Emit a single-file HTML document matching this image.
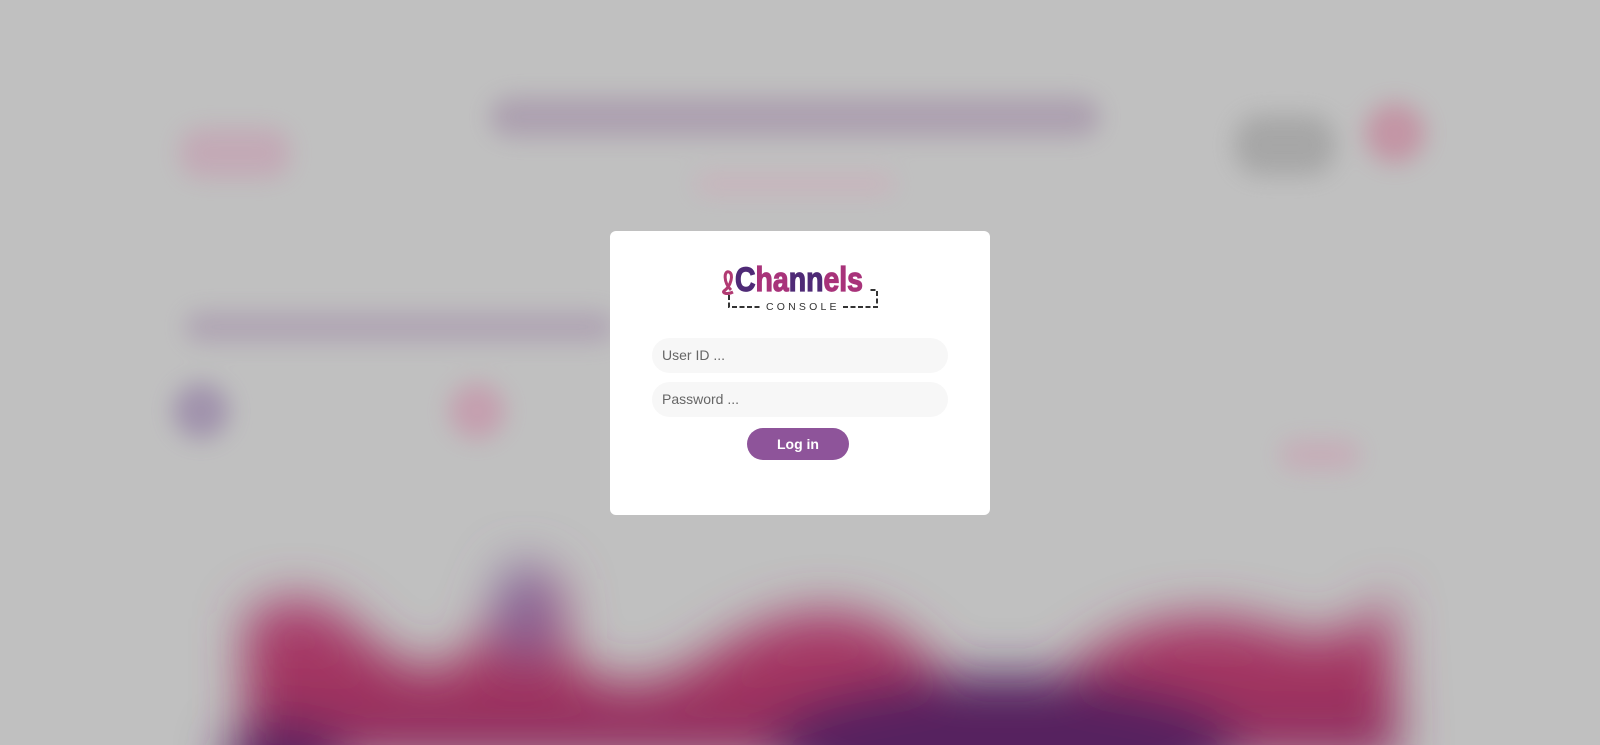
<!DOCTYPE html>
<html><head><meta charset="utf-8"><style>
html,body{margin:0;padding:0;width:1600px;height:745px;overflow:hidden;background:#c0c0c0;font-family:"Liberation Sans",Arial,sans-serif}
.bg{position:absolute;left:0;top:0;width:1600px;height:745px;overflow:hidden}
.card{position:absolute;left:610px;top:231px;width:380px;height:284px;background:#fff;border-radius:6px}
.inp{position:absolute;left:42px;width:296px;height:35px;background:#f7f7f7;border-radius:18px;font-size:14px;color:#666;line-height:35px;box-sizing:border-box;padding-left:10px}
.btn{position:absolute;left:137px;top:197px;width:102px;height:32px;background:#8e549a;border-radius:16px;color:#fff;font-weight:bold;font-size:14px;text-align:center;line-height:32px}
</style></head><body>
<svg class="bg" width="1600" height="745" viewBox="0 0 1600 745">
<defs>
<filter id="b" x="-20%" y="-20%" width="140%" height="140%"><feGaussianBlur stdDeviation="24"/></filter>
<filter id="b2" x="-30%" y="-100%" width="160%" height="300%"><feGaussianBlur stdDeviation="12"/></filter>
<linearGradient id="g" x1="0" y1="0" x2="0" y2="1"><stop offset="0" stop-color="#b04a7a"/><stop offset="0.6" stop-color="#a1335e"/><stop offset="1" stop-color="#8a2d62"/></linearGradient>
</defs>
<rect width="1600" height="745" fill="#c0c0c0"/>
<g filter="url(#b2)" opacity="0.8">
<rect x="490" y="97" width="610" height="40" rx="20" fill="#a899ac"/>
<rect x="180" y="128" width="110" height="50" rx="20" fill="#c4a4b4"/>
<rect x="1235" y="115" width="100" height="60" rx="25" fill="#a0a0a0"/>
<circle cx="1395" cy="133" r="30" fill="#c48a9e"/>
<rect x="695" y="174" width="200" height="20" rx="10" fill="#cbb0bc"/>
<rect x="185" y="312" width="430" height="30" rx="15" fill="#ac9eb0"/>
<circle cx="201" cy="411" r="28" fill="#9a88a8"/>
<circle cx="477" cy="411" r="28" fill="#c697ab"/>
<rect x="1280" y="440" width="80" height="30" rx="15" fill="#c8a8b6"/>
</g>
<g filter="url(#b)">
<path d="M245 760 L245 620 Q300 570 360 630 Q430 700 480 640 L510 570 L560 580 L570 660 Q630 710 715 650 Q835 570 920 650 Q1000 730 1080 660 Q1175 590 1285 630 Q1355 650 1390 590 L1400 760 Z" fill="url(#g)"/>
<ellipse cx="1005" cy="745" rx="235" ry="70" fill="#57235e"/>
<ellipse cx="285" cy="760" rx="60" ry="40" fill="#5a235e"/>
<ellipse cx="525" cy="612" rx="28" ry="50" fill="#856596"/>
</g>
</svg>
<div class="card">
<svg style="position:absolute;left:109px;top:28px" width="162" height="52" viewBox="0 0 162 52">
<path d="M12 31 C4 23 5 11 10 13 C15 15 12 27 5 32 C3 34 8 36 14 33" fill="none" stroke="#b13a72" stroke-width="3"/>
<text x="16" y="32" font-family="Liberation Sans Narrow,Liberation Sans,sans-serif" font-weight="bold" font-size="34" fill="#4f2a76" stroke="#4f2a76" stroke-width="1.2" textLength="128" lengthAdjust="spacingAndGlyphs">C<tspan fill="#a8337a" stroke="#a8337a">ha</tspan><tspan>nn</tspan><tspan fill="#a8337a" stroke="#a8337a">els</tspan></text>
<path d="M10 36 V48 H43 M124 48 H158 V31 H151" fill="none" stroke="#333" stroke-width="2" stroke-dasharray="5 2.5"/>
<text x="47" y="51" font-family="Liberation Sans,sans-serif" font-size="10.5" fill="#333" letter-spacing="3.2">CONSOLE</text>
</svg>
<div class="inp" style="top:107px">User ID ...</div>
<div class="inp" style="top:151px">Password ...</div>
<div class="btn">Log in</div>
</div>
</body></html>
